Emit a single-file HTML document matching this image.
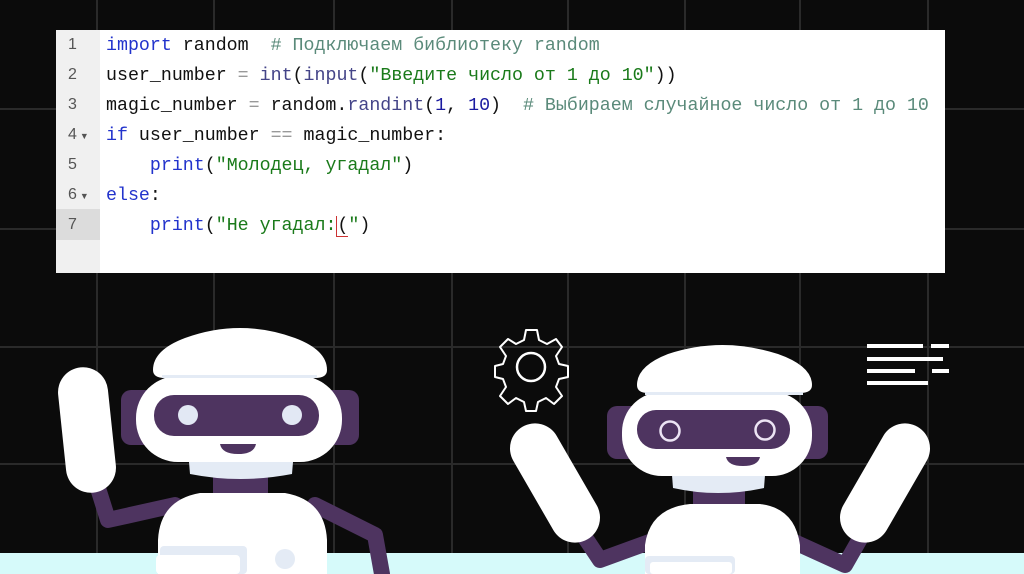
<!DOCTYPE html>
<html><head><meta charset="utf-8"><style>
body{margin:0;width:1024px;height:574px;overflow:hidden;background:#0b0b0b;position:relative}
.code{position:absolute;left:56px;top:30px;width:889px;height:243px;background:#fff;overflow:hidden}
.gut{position:absolute;left:0;top:0;width:44px;height:243px;background:#f0f0f0}
.ln{position:absolute;left:0;width:44px;height:30px;line-height:30px;font:16px "Liberation Sans",sans-serif;color:#555;text-indent:12px}
.row{position:absolute;left:50px;height:30px;line-height:30px;font:18.3px "Liberation Mono","DejaVu Sans Mono",monospace;color:#111;white-space:pre}
.k{color:#2233cc}.s{color:#1a7a1a}.c{color:#5a8a7a}.n{color:#1a1aa0}.o{color:#999}.f{color:#444488}
</style></head><body>
<svg width="1024" height="574" style="position:absolute;left:0;top:0">
<g stroke="#2a2a2a" stroke-width="2">
<line x1="97" y1="0" x2="97" y2="574"/><line x1="214" y1="0" x2="214" y2="574"/><line x1="334" y1="0" x2="334" y2="574"/><line x1="452" y1="0" x2="452" y2="574"/><line x1="568" y1="0" x2="568" y2="574"/><line x1="685" y1="0" x2="685" y2="574"/><line x1="800" y1="0" x2="800" y2="574"/><line x1="928" y1="0" x2="928" y2="574"/>
<line x1="0" y1="109" x2="1024" y2="109"/><line x1="0" y1="229" x2="1024" y2="229"/><line x1="0" y1="347" x2="1024" y2="347"/><line x1="0" y1="464" x2="1024" y2="464"/>
</g>
<rect x="0" y="553" width="1024" height="21" fill="#d6fafa"/>
<g>
<path d="M97 485 L108 520 L175 505" stroke="#4e3460" stroke-width="16" fill="none" stroke-linecap="round" stroke-linejoin="round"/>
<path d="M315 505 L375 535 L382 574" stroke="#4e3460" stroke-width="16" fill="none" stroke-linecap="round" stroke-linejoin="round"/>
<rect x="62" y="367" width="50" height="126" rx="25" fill="#fff" transform="rotate(-6 87 430)"/>
<rect x="121" y="390" width="238" height="55" rx="10" fill="#4e3460"/>
<rect x="213" y="470" width="55" height="30" fill="#4e3460"/>
<path d="M189 462 H293 L292 474 Q240 484 190 474 Z" fill="#e4ebf5"/>
<rect x="136" y="376" width="206" height="86" rx="42" fill="#fff"/>
<path d="M153 370 Q153 350 185 338 Q240 318 295 338 Q327 350 327 370 Q327 378 315 378 H165 Q153 378 153 370Z" fill="#fff"/>
<rect x="162" y="375" width="155" height="3" fill="#e4ebf5"/>
<rect x="154" y="395" width="165" height="41" rx="20" fill="#4e3460"/>
<circle cx="188" cy="415" r="10" fill="#e2e8f4"/><circle cx="292" cy="415" r="10" fill="#e2e8f4"/>
<path d="M220 444 H256 Q254 454 238 454 Q222 454 220 444Z" fill="#4e3460"/>
<path d="M158 574 V540 Q160 500 200 493 H285 Q325 500 327 540 V574Z" fill="#fff"/>
<rect x="160" y="546" width="87" height="28" rx="4" fill="#e4ebf5"/>
<rect x="156" y="555" width="84" height="19" rx="4" fill="#fff"/>
<circle cx="285" cy="559" r="10" fill="#e4ebf5"/>
</g>
<path d="M526 330 H537 L539 340 L547 344 L556 339 L562 347 L556 356 L559 364 L568 366 V377 L559 379 L556 387 L562 396 L554 404 L546 398 L538 402 L536 411 H526 L524 402 L516 398 L508 404 L500 396 L506 387 L503 379 L495 377 V366 L503 364 L506 356 L500 347 L508 339 L516 344 L524 340 Z" fill="none" stroke="#fff" stroke-width="2" stroke-linejoin="round"/>
<circle cx="531" cy="367" r="14" fill="none" stroke="#fff" stroke-width="2.5"/>
<g fill="#fff"><rect x="867" y="344" width="56" height="4"/><rect x="931" y="344" width="18" height="4"/><rect x="867" y="357" width="76" height="4"/><rect x="867" y="369" width="48" height="4"/><rect x="932" y="369" width="17" height="4"/><rect x="867" y="381" width="61" height="4"/></g>
<g>
<path d="M580 530 L600 560 L655 540" stroke="#4e3460" stroke-width="16" fill="none" stroke-linecap="round" stroke-linejoin="round"/>
<path d="M790 540 L845 565 L865 530" stroke="#4e3460" stroke-width="16" fill="none" stroke-linecap="round" stroke-linejoin="round"/>
<rect x="530" y="418" width="50" height="130" rx="25" fill="#fff" transform="rotate(-30 555 483)"/>
<rect x="860" y="418" width="50" height="130" rx="25" fill="#fff" transform="rotate(30 885 483)"/>
<rect x="607" y="406" width="221" height="53" rx="10" fill="#4e3460"/>
<rect x="693" y="485" width="52" height="25" fill="#4e3460"/>
<path d="M672 475 H765 L764 488 Q718 498 673 488 Z" fill="#e4ebf5"/>
<rect x="622" y="392" width="190" height="84" rx="40" fill="#fff"/>
<path d="M637 385 Q637 366 668 354 Q722 336 778 354 Q812 366 812 385 Q812 393 800 393 H648 Q637 393 637 385Z" fill="#fff"/>
<rect x="645" y="392" width="158" height="3" fill="#e4ebf5"/>
<rect x="637" y="410" width="153" height="39" rx="19" fill="#4e3460"/>
<circle cx="670" cy="431" r="9.5" fill="none" stroke="#ece4f4" stroke-width="2.5"/><circle cx="765" cy="430" r="9.5" fill="none" stroke="#ece4f4" stroke-width="2.5"/>
<path d="M726 457 H760 Q758 466 743 466 Q728 466 726 457Z" fill="#4e3460"/>
<path d="M645 574 V545 Q650 508 690 504 H760 Q795 508 800 545 V574Z" fill="#fff"/>
<rect x="645" y="556" width="90" height="18" rx="4" fill="#e4ebf5"/>
<rect x="650" y="562" width="82" height="12" rx="3" fill="#fff"/>
</g>
</svg>
<div class="code">
<div class="gut"></div>
<div style="position:absolute;left:0;top:179px;width:44px;height:31px;background:#dcdcdc"></div>
<div class="ln" style="top:6px">1</div><div class="ln" style="top:36px">2</div><div class="ln" style="top:66px">3</div><div class="ln" style="top:96px">4<span style="font-size:9px;margin-left:3px">▼</span></div><div class="ln" style="top:126px">5</div><div class="ln" style="top:156px">6<span style="font-size:9px;margin-left:3px">▼</span></div><div class="ln" style="top:186px">7</div>
<div class="row" style="top:6px"><span class="k">import</span> random  <span class="c"># Подключаем библиотеку random</span></div>
<div class="row" style="top:36px">user_number <span class="o">=</span> <span class="f">int</span>(<span class="f">input</span>(<span class="s">"Введите число от 1 до 10"</span>))</div>
<div class="row" style="top:66px">magic_number <span class="o">=</span> random.<span class="f">randint</span>(<span class="n">1</span>, <span class="n">10</span>)  <span class="c"># Выбираем случайное число от 1 до 10</span></div>
<div class="row" style="top:96px"><span class="k">if</span> user_number <span class="o">==</span> magic_number:</div>
<div class="row" style="top:126px">    <span class="k">print</span>(<span class="s">"Молодец, угадал"</span>)</div>
<div class="row" style="top:156px"><span class="k">else</span>:</div>
<div class="row" style="top:186px">    <span class="k">print</span>(<span class="s">"Не угадал:</span><span style="border-left:1px solid #c33;border-bottom:1px solid #c33">(</span><span class="s">"</span>)</div>
</div>
</body></html>
